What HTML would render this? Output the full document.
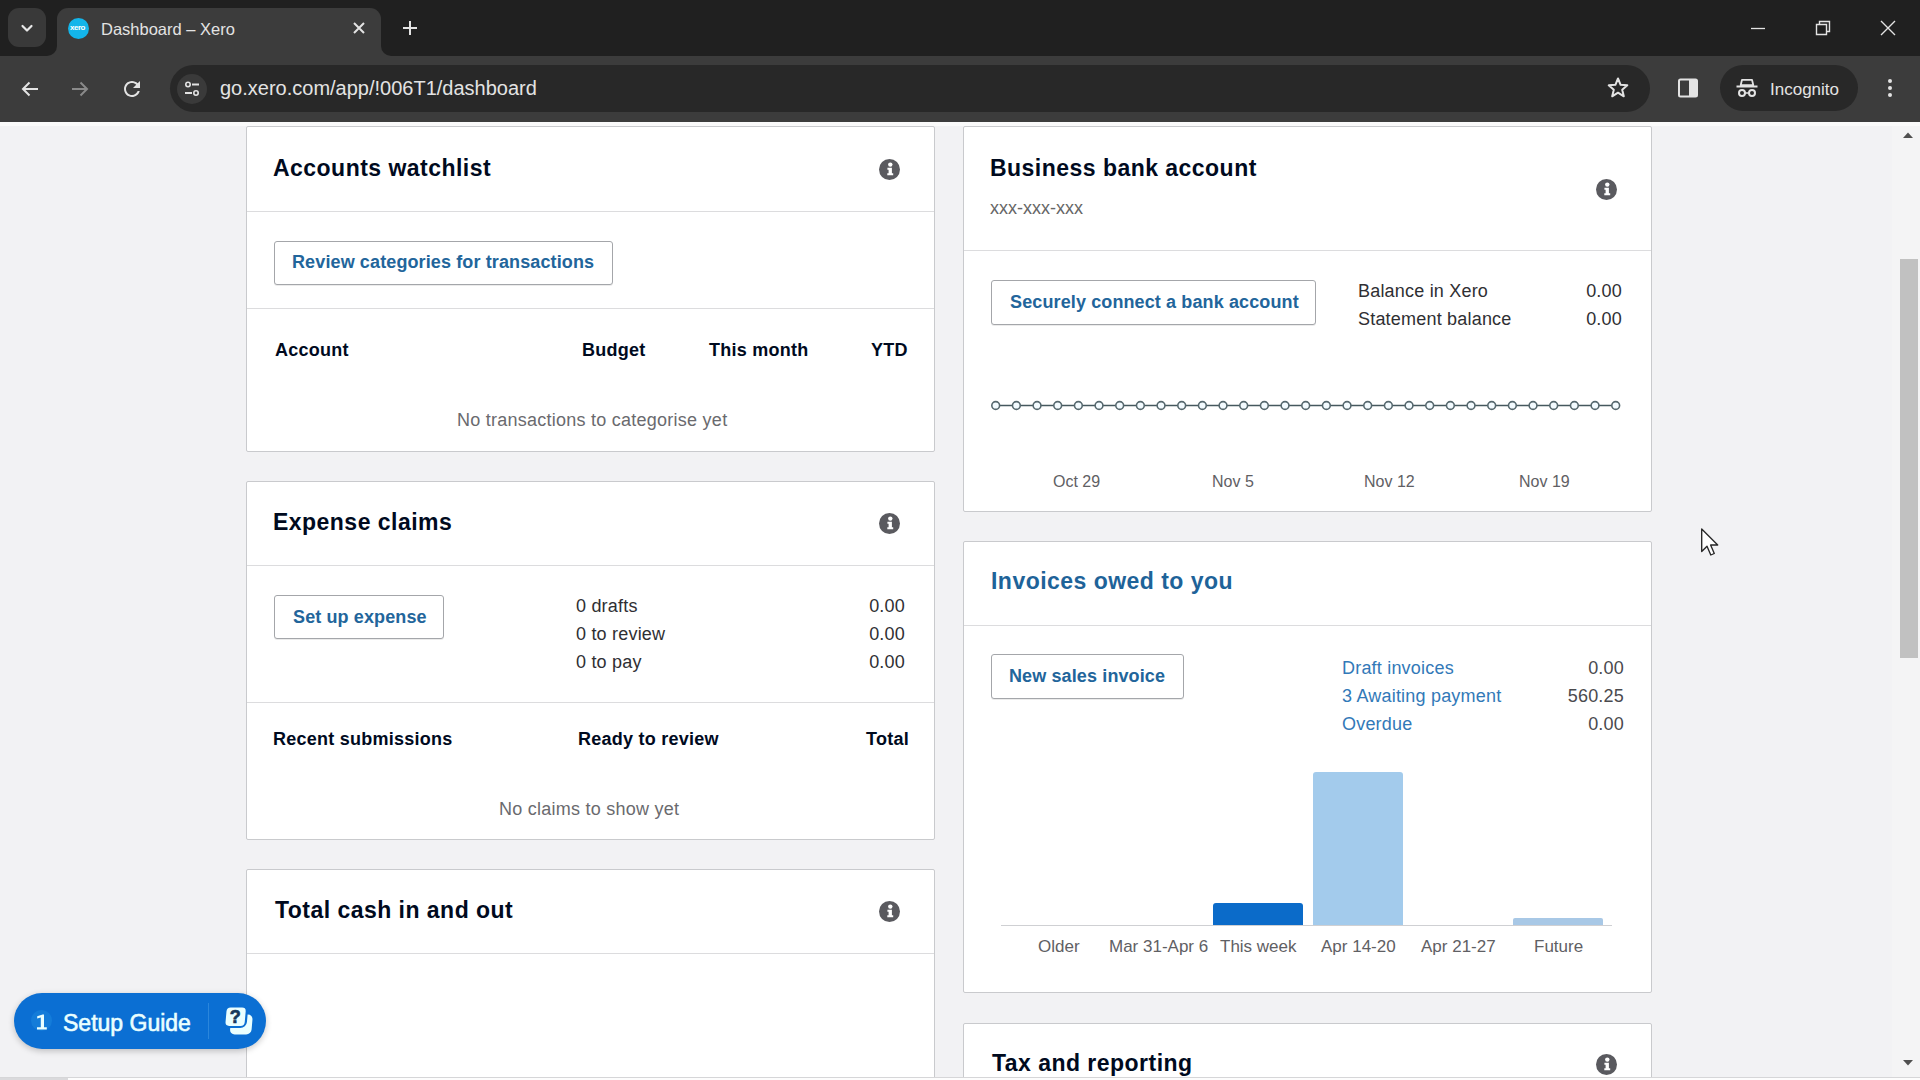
<!DOCTYPE html>
<html><head><meta charset="utf-8">
<style>
*{box-sizing:border-box;margin:0;padding:0}
html,body{width:1920px;height:1080px;overflow:hidden;background:#f2f2f4;font-family:"Liberation Sans",sans-serif}
.a{position:absolute}
.t{position:absolute;white-space:nowrap;line-height:1}
#chrome{position:absolute;left:0;top:0;width:1920px;height:122px;background:#202020}
#toolbar{position:absolute;left:0;top:56px;width:1920px;height:66px;background:#3c3c3c}
.card{position:absolute;background:#fff;border:1px solid #c9cacd;border-radius:2px}
.hr{position:absolute;height:1px;background:#dcdcde}
.ttl{font-size:23px;font-weight:700;color:#000a1e;letter-spacing:0.47px}
.btn{position:absolute;border:1px solid #a4a6aa;border-radius:3px;background:#fff;box-shadow:0 1px 0 rgba(0,0,0,.08)}
.bt{font-size:18px;font-weight:700;color:#22659b;letter-spacing:0.12px}
.b18{font-size:18px;font-weight:700;color:#000a1e;letter-spacing:0.25px}
.r18{font-size:18px;color:#2f2f33;letter-spacing:0.2px}
.g18{font-size:18px;color:#6a6a6e;letter-spacing:0.25px}
.lnk{font-size:18px;color:#3279b8;letter-spacing:0.2px}
.info{position:absolute;width:21px;height:21px;border-radius:50%;background:#5a5a5f}
.info svg{position:absolute;left:0;top:0}
.cl{font-size:17px;color:#5f6064}
</style></head><body>

<!-- Browser chrome -->
<div id="chrome"></div>
<div id="toolbar"></div>
<div class="a" style="left:381px;top:46px;width:10px;height:10px;background:#3c3c3c"></div>
<div class="a" style="left:381px;top:36px;width:20px;height:20px;border-radius:0 0 0 10px;background:#202020"></div>
<div class="a" style="left:47px;top:46px;width:10px;height:10px;background:#3c3c3c"></div>
<div class="a" style="left:37px;top:36px;width:20px;height:20px;border-radius:0 0 10px 0;background:#202020"></div>
<div class="a" style="left:8px;top:8px;width:38px;height:39px;border-radius:11px;background:#393939"></div>
<svg class="a" style="left:17px;top:18px" width="20" height="20" viewBox="0 0 20 20"><path d="M5.5 8 L10 12.5 L14.5 8" fill="none" stroke="#e8e8e8" stroke-width="2.2" stroke-linecap="round" stroke-linejoin="round"/></svg>
<div class="a" style="left:57px;top:8px;width:324px;height:60px;border-radius:11px 11px 0 0;background:#3c3c3c"></div>
<div class="a" style="left:68px;top:18px;width:21px;height:21px;border-radius:50%;background:#13b5ea"></div>
<div class="t" style="left:70px;top:24px;font-size:8px;font-weight:700;color:#fff;letter-spacing:-0.5px">xero</div>
<div class="t" style="left:101px;top:21px;font-size:16.5px;color:#e3e3e3">Dashboard – Xero</div>
<svg class="a" style="left:351px;top:20px" width="16" height="16" viewBox="0 0 16 16"><path d="M3 3 L13 13 M13 3 L3 13" stroke="#e3e3e3" stroke-width="2"/></svg>
<svg class="a" style="left:401px;top:19px" width="18" height="18" viewBox="0 0 18 18"><path d="M9 2 V16 M2 9 H16" stroke="#e3e3e3" stroke-width="2"/></svg>
<svg class="a" style="left:1750px;top:20px" width="16" height="16" viewBox="0 0 16 16"><path d="M1 8.5 H15" stroke="#e3e3e3" stroke-width="1.3"/></svg>
<svg class="a" style="left:1814px;top:19px" width="18" height="18" viewBox="0 0 18 18"><path d="M2.5 5.5 H12.5 V15.5 H2.5 Z M5.5 5.5 V2.5 H15.5 V12.5 H12.5" fill="none" stroke="#e3e3e3" stroke-width="1.4"/></svg>
<svg class="a" style="left:1879px;top:19px" width="18" height="18" viewBox="0 0 18 18"><path d="M2 2 L16 16 M16 2 L2 16" stroke="#e3e3e3" stroke-width="1.4"/></svg>
<svg class="a" style="left:18px;top:77px" width="24" height="24" viewBox="0 0 24 24"><path d="M20 12 H5 M11.5 5.5 L5 12 L11.5 18.5" fill="none" stroke="#e3e3e3" stroke-width="2"/></svg>
<svg class="a" style="left:68px;top:77px" width="24" height="24" viewBox="0 0 24 24"><path d="M4 12 H19 M12.5 5.5 L19 12 L12.5 18.5" fill="none" stroke="#8a8a8a" stroke-width="2"/></svg>
<svg class="a" style="left:119.5px;top:76.5px" width="24" height="24" viewBox="0 0 24 24"><path d="M17.65 6.35C16.2 4.9 14.21 4 12 4c-4.42 0-7.99 3.58-7.99 8s3.57 8 7.99 8c3.73 0 6.84-2.55 7.73-6h-2.08c-.82 2.33-3.04 4-5.65 4-3.31 0-6-2.69-6-6s2.69-6 6-6c1.66 0 3.14.69 4.22 1.78L13 11h7V4l-2.35 2.35z" fill="#e3e3e3"/></svg>
<div class="a" style="left:170px;top:65px;width:1480px;height:47px;border-radius:23.5px;background:#282828"></div>
<div class="a" style="left:177px;top:74px;width:30px;height:30px;border-radius:50%;background:#3a3a3a"></div>
<svg class="a" style="left:182px;top:79px" width="20" height="20" viewBox="0 0 20 20"><circle cx="6" cy="5.5" r="2.2" fill="none" stroke="#e3e3e3" stroke-width="1.6"/><path d="M10 5.5 H17" stroke="#e3e3e3" stroke-width="2"/><path d="M3 14 H10" stroke="#e3e3e3" stroke-width="2"/><circle cx="14" cy="14" r="2.2" fill="none" stroke="#e3e3e3" stroke-width="1.6"/></svg>
<div class="t" style="left:220px;top:78px;font-size:20px;color:#e3e3e3">go.xero.com/app/!006T1/dashboard</div>
<svg class="a" style="left:1605px;top:75px" width="26" height="26" viewBox="0 0 26 26"><path d="M13 3.5 L15.6 9.8 L22.3 10.3 L17.2 14.7 L18.8 21.3 L13 17.7 L7.2 21.3 L8.8 14.7 L3.7 10.3 L10.4 9.8 Z" fill="none" stroke="#e3e3e3" stroke-width="2" stroke-linejoin="round"/></svg>
<svg class="a" style="left:1676px;top:76px" width="24" height="24" viewBox="0 0 24 24"><rect x="3" y="3.5" width="18" height="17" rx="1.5" fill="none" stroke="#e3e3e3" stroke-width="2"/><rect x="13" y="4" width="7.5" height="16" fill="#e3e3e3"/></svg>
<div class="a" style="left:1720px;top:65px;width:138px;height:46px;border-radius:23px;background:#282828"></div>
<svg class="a" style="left:1734px;top:76px" width="26" height="24" viewBox="0 0 26 24"><path d="M8 3.8 H18 L19.3 9.2 H6.7 Z" fill="none" stroke="#e3e3e3" stroke-width="1.8" stroke-linejoin="round"/><path d="M2.5 10.5 H23.5" stroke="#e3e3e3" stroke-width="2"/><circle cx="8" cy="17" r="3" fill="none" stroke="#e3e3e3" stroke-width="2"/><circle cx="18" cy="17" r="3" fill="none" stroke="#e3e3e3" stroke-width="2"/><path d="M11 17 H15" stroke="#e3e3e3" stroke-width="1.5"/></svg>
<div class="t" style="left:1770px;top:81px;font-size:17px;color:#e3e3e3">Incognito</div>
<svg class="a" style="left:1880px;top:76px" width="20" height="24" viewBox="0 0 20 24"><circle cx="10" cy="5" r="2" fill="#e3e3e3"/><circle cx="10" cy="12" r="2" fill="#e3e3e3"/><circle cx="10" cy="19" r="2" fill="#e3e3e3"/></svg>

<!-- Page cards -->
<div class="a" style="left:0;top:122px;width:1920px;height:4px;background:#fafafa"></div>
<div class="a" style="left:1892px;top:126px;width:28px;height:951px;background:#f4f4f5"></div>
<!-- Accounts watchlist -->
<div class="card" style="left:246px;top:126px;width:689px;height:326px"></div>
<div class="hr" style="left:247px;top:211px;width:687px"></div>
<div class="hr" style="left:247px;top:308px;width:687px"></div>
<div class="t ttl" style="left:273px;top:157px">Accounts watchlist</div>
<div class="info" style="left:878.5px;top:159px"><svg width="21" height="21" viewBox="0 0 21 21"><circle cx="11.3" cy="5.6" r="2.2" fill="#fff"/><path d="M8.4 8.7 H12.9 V14.2 H14.2 V16.3 H8.3 V14.2 H9.6 V10.7 H8.4 Z" fill="#fff"/></svg></div>
<div class="btn" style="left:274px;top:241px;width:339px;height:44px"></div>
<div class="t bt" style="left:292px;top:253px">Review categories for transactions</div>
<div class="t b18" style="left:275px;top:341px">Account</div>
<div class="t b18" style="left:582px;top:341px">Budget</div>
<div class="t b18" style="left:709px;top:341px">This month</div>
<div class="t b18" style="left:871px;top:341px">YTD</div>
<div class="t g18" style="left:457px;top:411px">No transactions to categorise yet</div>

<!-- Expense claims -->
<div class="card" style="left:246px;top:481px;width:689px;height:359px"></div>
<div class="hr" style="left:247px;top:565px;width:687px"></div>
<div class="hr" style="left:247px;top:702px;width:687px"></div>
<div class="t ttl" style="left:273px;top:511px">Expense claims</div>
<div class="info" style="left:878.5px;top:513px"><svg width="21" height="21" viewBox="0 0 21 21"><circle cx="11.3" cy="5.6" r="2.2" fill="#fff"/><path d="M8.4 8.7 H12.9 V14.2 H14.2 V16.3 H8.3 V14.2 H9.6 V10.7 H8.4 Z" fill="#fff"/></svg></div>
<div class="btn" style="left:274px;top:595px;width:170px;height:44px"></div>
<div class="t bt" style="left:293px;top:608px">Set up expense</div>
<div class="t r18" style="left:576px;top:597px">0 drafts</div>
<div class="t r18" style="left:576px;top:625px">0 to review</div>
<div class="t r18" style="left:576px;top:653px">0 to pay</div>
<div class="t r18" style="right:1015px;top:597px">0.00</div>
<div class="t r18" style="right:1015px;top:625px">0.00</div>
<div class="t r18" style="right:1015px;top:653px">0.00</div>
<div class="t b18" style="left:273px;top:730px">Recent submissions</div>
<div class="t b18" style="left:578px;top:730px">Ready to review</div>
<div class="t b18" style="right:1011px;top:730px">Total</div>
<div class="t g18" style="left:499px;top:800px">No claims to show yet</div>

<!-- Total cash in and out -->
<div class="card" style="left:246px;top:869px;width:689px;height:260px"></div>
<div class="hr" style="left:247px;top:953px;width:687px"></div>
<div class="t ttl" style="left:275px;top:899px">Total cash in and out</div>
<div class="info" style="left:878.5px;top:901px"><svg width="21" height="21" viewBox="0 0 21 21"><circle cx="11.3" cy="5.6" r="2.2" fill="#fff"/><path d="M8.4 8.7 H12.9 V14.2 H14.2 V16.3 H8.3 V14.2 H9.6 V10.7 H8.4 Z" fill="#fff"/></svg></div>

<!-- Business bank account -->
<div class="card" style="left:963px;top:126px;width:689px;height:386px"></div>
<div class="hr" style="left:964px;top:250px;width:687px"></div>
<div class="t ttl" style="left:990px;top:157px">Business bank account</div>
<div class="t" style="left:990px;top:199px;font-size:18px;color:#666">xxx-xxx-xxx</div>
<div class="info" style="left:1595.5px;top:179px"><svg width="21" height="21" viewBox="0 0 21 21"><circle cx="11.3" cy="5.6" r="2.2" fill="#fff"/><path d="M8.4 8.7 H12.9 V14.2 H14.2 V16.3 H8.3 V14.2 H9.6 V10.7 H8.4 Z" fill="#fff"/></svg></div>
<div class="btn" style="left:991px;top:280px;width:325px;height:45px"></div>
<div class="t bt" style="left:1010px;top:293px">Securely connect a bank account</div>
<div class="t r18" style="left:1358px;top:282px">Balance in Xero</div>
<div class="t r18" style="left:1358px;top:310px">Statement balance</div>
<div class="t r18" style="right:298px;top:282px">0.00</div>
<div class="t r18" style="right:298px;top:310px">0.00</div>
<svg class="a" style="left:963px;top:380px" width="688" height="50"><line x1="33" y1="25.5" x2="653" y2="25.5" stroke="#45585e" stroke-width="1.5"/><circle cx="32.70" cy="25.5" r="3.9" fill="#f3fbff" stroke="#56686e" stroke-width="1.6"/><circle cx="53.37" cy="25.5" r="3.9" fill="#f3fbff" stroke="#56686e" stroke-width="1.6"/><circle cx="74.03" cy="25.5" r="3.9" fill="#f3fbff" stroke="#56686e" stroke-width="1.6"/><circle cx="94.70" cy="25.5" r="3.9" fill="#f3fbff" stroke="#56686e" stroke-width="1.6"/><circle cx="115.37" cy="25.5" r="3.9" fill="#f3fbff" stroke="#56686e" stroke-width="1.6"/><circle cx="136.03" cy="25.5" r="3.9" fill="#f3fbff" stroke="#56686e" stroke-width="1.6"/><circle cx="156.70" cy="25.5" r="3.9" fill="#f3fbff" stroke="#56686e" stroke-width="1.6"/><circle cx="177.37" cy="25.5" r="3.9" fill="#f3fbff" stroke="#56686e" stroke-width="1.6"/><circle cx="198.03" cy="25.5" r="3.9" fill="#f3fbff" stroke="#56686e" stroke-width="1.6"/><circle cx="218.70" cy="25.5" r="3.9" fill="#f3fbff" stroke="#56686e" stroke-width="1.6"/><circle cx="239.37" cy="25.5" r="3.9" fill="#f3fbff" stroke="#56686e" stroke-width="1.6"/><circle cx="260.03" cy="25.5" r="3.9" fill="#f3fbff" stroke="#56686e" stroke-width="1.6"/><circle cx="280.70" cy="25.5" r="3.9" fill="#f3fbff" stroke="#56686e" stroke-width="1.6"/><circle cx="301.37" cy="25.5" r="3.9" fill="#f3fbff" stroke="#56686e" stroke-width="1.6"/><circle cx="322.03" cy="25.5" r="3.9" fill="#f3fbff" stroke="#56686e" stroke-width="1.6"/><circle cx="342.70" cy="25.5" r="3.9" fill="#f3fbff" stroke="#56686e" stroke-width="1.6"/><circle cx="363.37" cy="25.5" r="3.9" fill="#f3fbff" stroke="#56686e" stroke-width="1.6"/><circle cx="384.03" cy="25.5" r="3.9" fill="#f3fbff" stroke="#56686e" stroke-width="1.6"/><circle cx="404.70" cy="25.5" r="3.9" fill="#f3fbff" stroke="#56686e" stroke-width="1.6"/><circle cx="425.37" cy="25.5" r="3.9" fill="#f3fbff" stroke="#56686e" stroke-width="1.6"/><circle cx="446.03" cy="25.5" r="3.9" fill="#f3fbff" stroke="#56686e" stroke-width="1.6"/><circle cx="466.70" cy="25.5" r="3.9" fill="#f3fbff" stroke="#56686e" stroke-width="1.6"/><circle cx="487.37" cy="25.5" r="3.9" fill="#f3fbff" stroke="#56686e" stroke-width="1.6"/><circle cx="508.03" cy="25.5" r="3.9" fill="#f3fbff" stroke="#56686e" stroke-width="1.6"/><circle cx="528.70" cy="25.5" r="3.9" fill="#f3fbff" stroke="#56686e" stroke-width="1.6"/><circle cx="549.37" cy="25.5" r="3.9" fill="#f3fbff" stroke="#56686e" stroke-width="1.6"/><circle cx="570.03" cy="25.5" r="3.9" fill="#f3fbff" stroke="#56686e" stroke-width="1.6"/><circle cx="590.70" cy="25.5" r="3.9" fill="#f3fbff" stroke="#56686e" stroke-width="1.6"/><circle cx="611.37" cy="25.5" r="3.9" fill="#f3fbff" stroke="#56686e" stroke-width="1.6"/><circle cx="632.03" cy="25.5" r="3.9" fill="#f3fbff" stroke="#56686e" stroke-width="1.6"/><circle cx="652.70" cy="25.5" r="3.9" fill="#f3fbff" stroke="#56686e" stroke-width="1.6"/></svg>
<div class="t cl" style="left:1053px;top:474px;font-size:16px">Oct 29</div>
<div class="t cl" style="left:1212px;top:474px;font-size:16px">Nov 5</div>
<div class="t cl" style="left:1364px;top:474px;font-size:16px">Nov 12</div>
<div class="t cl" style="left:1519px;top:474px;font-size:16px">Nov 19</div>

<!-- Invoices owed to you -->
<div class="card" style="left:963px;top:541px;width:689px;height:452px"></div>
<div class="hr" style="left:964px;top:625px;width:687px"></div>
<div class="t ttl" style="left:991px;top:570px;color:#1e6399">Invoices owed to you</div>
<div class="btn" style="left:991px;top:654px;width:193px;height:45px"></div>
<div class="t bt" style="left:1009px;top:667px">New sales invoice</div>
<div class="t lnk" style="left:1342px;top:659px">Draft invoices</div>
<div class="t lnk" style="left:1342px;top:687px">3 Awaiting payment</div>
<div class="t lnk" style="left:1342px;top:715px">Overdue</div>
<div class="t r18" style="color:#4a4a4e;right:296px;top:659px">0.00</div>
<div class="t r18" style="color:#4a4a4e;right:296px;top:687px">560.25</div>
<div class="t r18" style="color:#4a4a4e;right:296px;top:715px">0.00</div>
<div class="a" style="left:1001px;top:925px;width:611px;height:1px;background:#cfd0d3"></div>
<div class="a" style="left:1213px;top:903px;width:90px;height:22px;background:#0b6bc9;border-radius:3px 3px 0 0"></div>
<div class="a" style="left:1313px;top:772px;width:90px;height:153px;background:#a3cbec;border-radius:3px 3px 0 0"></div>
<div class="a" style="left:1513px;top:918px;width:90px;height:7px;background:#a8c8e6;border-radius:2px 2px 0 0"></div>

<div class="t cl" style="left:1038px;top:938px">Older</div>
<div class="t cl" style="left:1109px;top:938px">Mar 31-Apr 6</div>
<div class="t cl" style="left:1220px;top:938px">This week</div>
<div class="t cl" style="left:1321px;top:938px">Apr 14-20</div>
<div class="t cl" style="left:1421px;top:938px">Apr 21-27</div>
<div class="t cl" style="left:1534px;top:938px">Future</div>

<!-- Tax and reporting -->
<div class="card" style="left:963px;top:1023px;width:689px;height:200px"></div>
<div class="t ttl" style="left:992px;top:1052px">Tax and reporting</div>
<div class="info" style="left:1595.5px;top:1054px"><svg width="21" height="21" viewBox="0 0 21 21"><circle cx="11.3" cy="5.6" r="2.2" fill="#fff"/><path d="M8.4 8.7 H12.9 V14.2 H14.2 V16.3 H8.3 V14.2 H9.6 V10.7 H8.4 Z" fill="#fff"/></svg></div>

<!-- Setup guide -->
<div class="a" style="left:14px;top:993px;width:252px;height:56px;border-radius:28px;background:#0b6fd3;box-shadow:0 2px 6px rgba(0,0,0,.22)"></div>
<div class="a" style="left:31px;top:1010px;width:21px;height:21px;border-radius:50%;background:#147cd9"></div>
<svg class="a" style="left:34px;top:1012px" width="16" height="20" viewBox="0 0 16 20"><path d="M3.2 4.2 L8.6 2.6 H10 V15.2 H12.8 V17.6 H3 V15.2 H6.8 V5.6 L3.2 6.6 Z" fill="#eaffff"/></svg>
<div class="t" style="left:63px;top:1012px;font-size:23px;color:#eaffff;-webkit-text-stroke:0.6px #eaffff">Setup Guide</div>
<div class="a" style="left:208px;top:1003px;width:1px;height:36px;background:#2a86dc"></div>
<svg class="a" style="left:220px;top:1002px" width="38" height="38" viewBox="0 0 38 38"><rect x="11" y="12.5" width="21.5" height="20" rx="5" fill="#eaffff" transform="skewX(-5) translate(1.5,0)"/><rect x="4.7" y="4.5" width="21.4" height="20.5" rx="5" fill="#eaffff" stroke="#0b6fd3" stroke-width="2.2" transform="skewX(-5) translate(1.5,0)"/><text x="15.3" y="21.3" font-family="Liberation Sans" font-size="18" font-weight="700" fill="#17395a" stroke="#17395a" stroke-width="0.7" text-anchor="middle">?</text></svg>

<!-- scrollbar -->
<div class="a" style="left:1900px;top:259px;width:18px;height:399px;background:#c1c1c1"></div>
<div class="a" style="left:0;top:1077px;width:1920px;height:1px;background:#d6d6d8"></div><div class="a" style="left:0;top:1078px;width:68px;height:2px;background:#dadadc"></div><div class="a" style="left:68px;top:1078px;width:1852px;height:2px;background:#fdfdfd"></div>

<svg class="a" style="left:1700px;top:528px" width="22" height="30" viewBox="0 0 22 30"><path d="M1.7 1 L1.7 23.5 L7 18.2 L10.8 27 L14.3 25.5 L10.6 17 L17.7 17 Z" fill="#fff" stroke="#262626" stroke-width="1.35" stroke-linejoin="round"/></svg>
<svg class="a" style="left:1902px;top:130px" width="12" height="10" viewBox="0 0 12 10"><path d="M1 8 L6 2.5 L11 8 Z" fill="#505050"/></svg>
<svg class="a" style="left:1902px;top:1058px" width="12" height="10" viewBox="0 0 12 10"><path d="M1 2 L6 7.5 L11 2 Z" fill="#505050"/></svg>
</body></html>
